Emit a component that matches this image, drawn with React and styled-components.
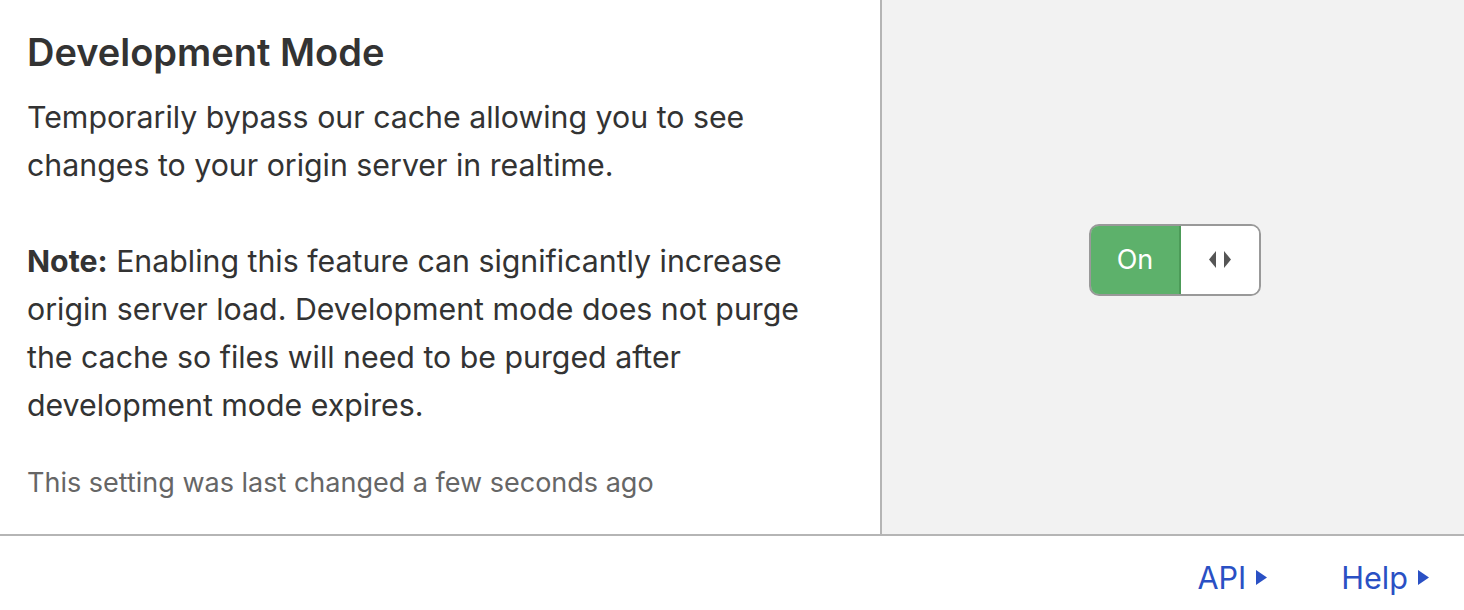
import React from 'react';
import styled, { createGlobalStyle } from 'styled-components';

const GlobalStyle = createGlobalStyle`
  html, body {
    margin: 0;
    padding: 0;
    background: #fff;
    font-family: Inter, "Noto Sans", "Liberation Sans", sans-serif;
    color: #333;
  }
`;

const Card = styled.div`
  width: 1464px;
  height: 610px;
  display: flex;
  flex-direction: column;
  overflow: hidden;
`;

const Body = styled.div`
  display: flex;
  border-bottom: 2px solid #b5b5b5;
`;

const Info = styled.div`
  width: 853px;
  padding: 32px 0 33px 27px;
  border-right: 2px solid #b5b5b5;
`;

const Title = styled.h3`
  margin: 0 0 21px;
  font-size: 38px;
  line-height: 40px;
  font-weight: 600;
  color: #333;
`;

const Text = styled.p`
  margin: 0 0 ${({ gap }) => gap || 0}px;
  font-size: 30.3px;
  line-height: 48px;
  color: #333;
  max-width: 805px;

  b {
    font-weight: 700;
  }
`;

const Changed = styled.div`
  margin-top: 36px;
  font-size: 27px;
  line-height: 36px;
  color: #666;
`;

const Control = styled.div`
  flex: 1;
  display: flex;
  align-items: center;
  justify-content: center;
  padding: 0 0 15px 4px;
  background: #f2f2f2;
`;

const Toggle = styled.div`
  display: flex;
  width: 172px;
  height: 72px;
  box-sizing: border-box;
  border-radius: 10px;
  overflow: hidden;
  border: 2px solid #999;
`;

const OnPart = styled.div`
  width: 88px;
  margin: -2px 0 -2px -2px;
  border: 2px solid #4c9b58;
  border-radius: 10px 0 0 10px;
  background: #5db16b;
  color: #fff;
  font-size: 27px;
  display: flex;
  align-items: center;
  justify-content: center;
`;

const Handle = styled.div`
  flex: 1;
  background: #fff;
  display: flex;
  align-items: center;
  justify-content: center;
  gap: 8px;
`;

const Footer = styled.div`
  flex: 1;
  display: flex;
  align-items: center;
  justify-content: flex-end;
  gap: 74px;
  padding: 8px 35px 0 0;
`;

const Link = styled.a`
  display: flex;
  align-items: center;
  gap: 10px;
  font-size: 30.6px;
  color: #2a50c4;
  text-decoration: none;

  svg {
    flex-shrink: 0;
  }
`;

const Caret = ({ dir = 'right', w = 11, h = 15, color = '#2a50c4' }) => (
  <svg width={w} height={h} viewBox="0 0 8 10" preserveAspectRatio="none">
    {dir === 'right' ? (
      <polygon points="0,0 8,5 0,10" fill={color} />
    ) : (
      <polygon points="8,0 0,5 8,10" fill={color} />
    )}
  </svg>
);

export default function App() {
  return (
    <>
      <GlobalStyle />
      <Card>
        <Body>
          <Info>
            <Title>Development Mode</Title>
            <Text gap={48}>
              Temporarily bypass our cache allowing you to see changes to your
              origin server in realtime.
            </Text>
            <Text>
              <b>Note:</b> Enabling this feature can significantly increase
              origin server load. Development mode does not purge the cache so
              files will need to be purged after development mode expires.
            </Text>
            <Changed>This setting was last changed a few seconds ago</Changed>
          </Info>
          <Control>
            <Toggle>
              <OnPart>On</OnPart>
              <Handle>
                <Caret dir="left" w={7} h={17} color="#555" />
                <Caret dir="right" w={7} h={17} color="#555" />
              </Handle>
            </Toggle>
          </Control>
        </Body>
        <Footer>
          <Link href="#">
            API <Caret />
          </Link>
          <Link href="#">
            Help <Caret />
          </Link>
        </Footer>
      </Card>
    </>
  );
}
